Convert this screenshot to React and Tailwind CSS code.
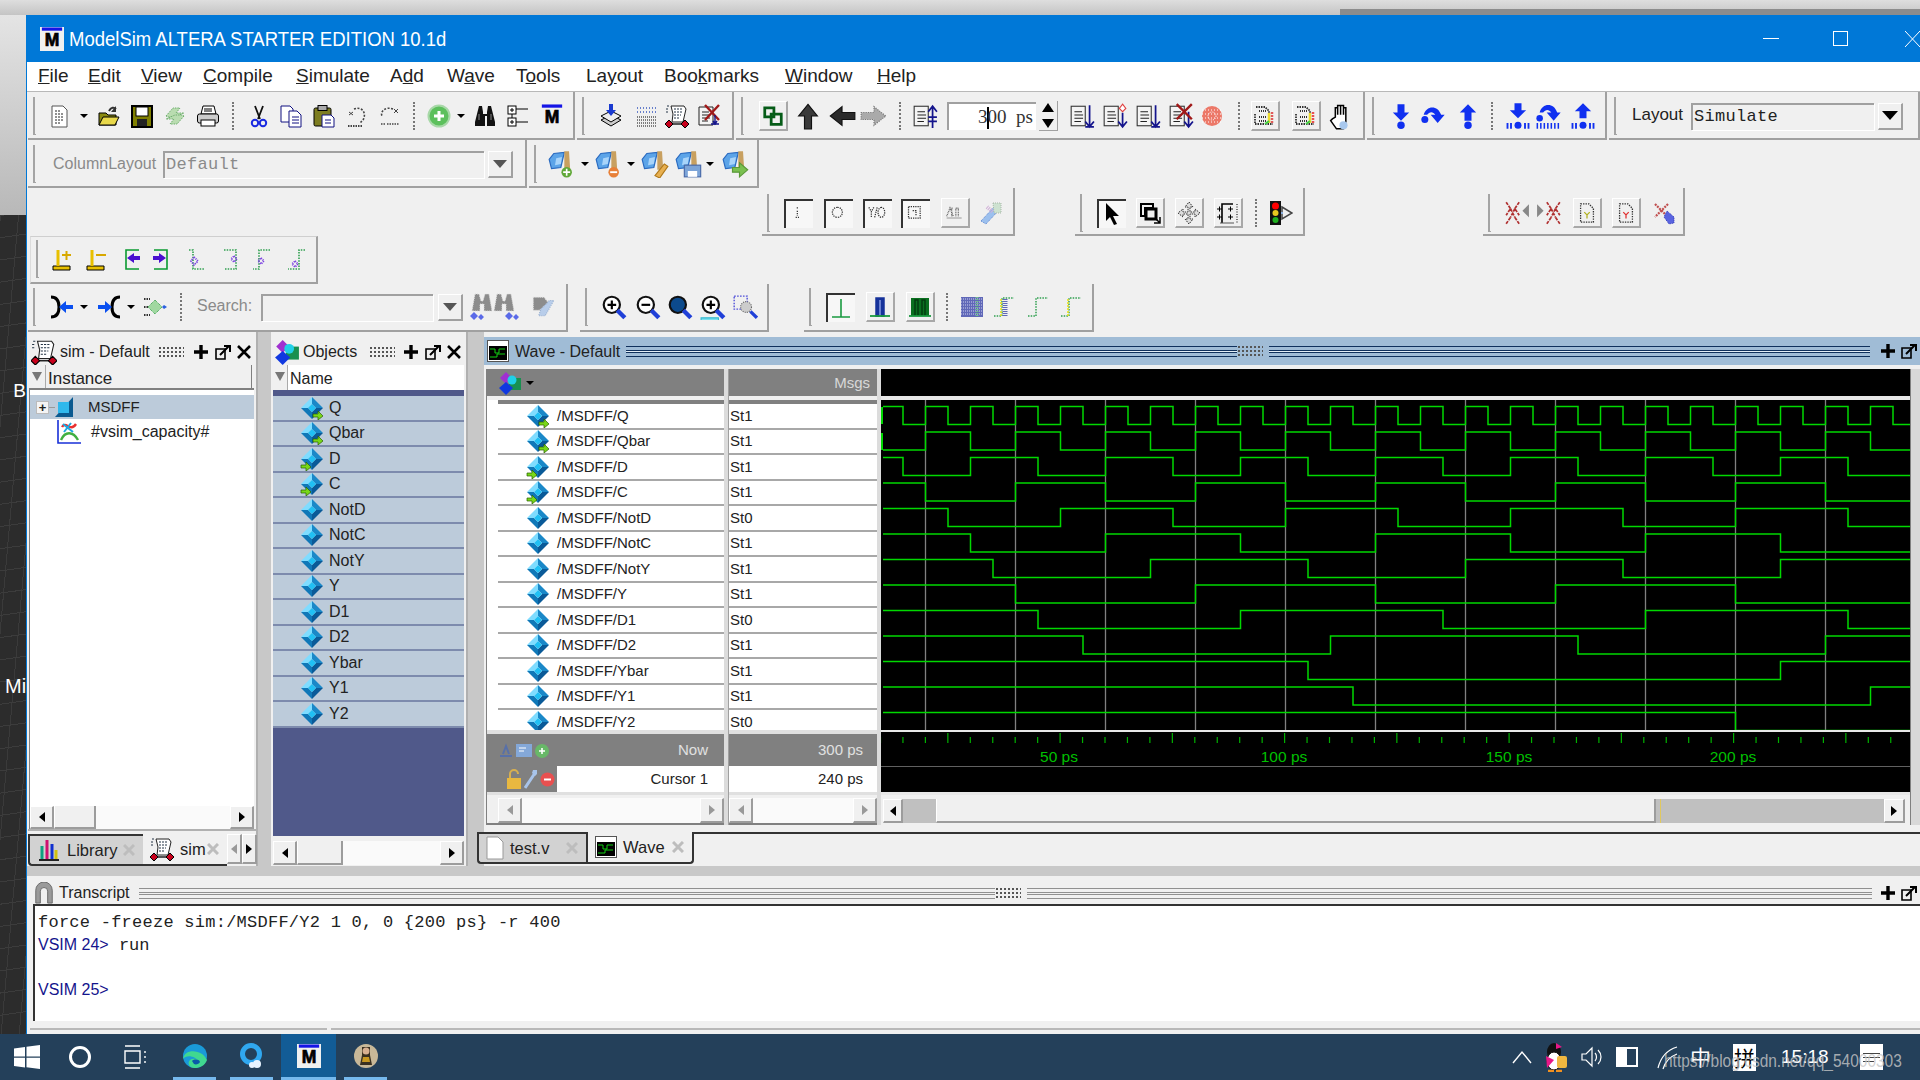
import clsx from "clsx";

const SANS = "font-['Liberation_Sans',sans-serif]";
const MONO = "font-['Liberation_Mono',monospace]";

const Ic = ({ children, s = 24 }) => (
  <svg width={s} height={s} viewBox="0 0 24 24" className="shrink-0">
    {children}
  </svg>
);

// toolbar layout helpers
const T = ({ c, children }) => <div className={clsx("flex justify-center items-center shrink-0", c)}>{children}</div>;
const Grip = ({ c }) => (
  <div className={clsx("shrink-0 h-full flex items-center pl-[5px]", c)}>
    <div className="w-[3px] h-[38px] border-l-2 border-b border-[#a4a4a4]" />
  </div>
);
const Seg = ({ c, children }) => (
  <div className={clsx("flex items-center h-[48px] shrink-0 border-r-2 border-b-2 border-[#a0a0a0]", c)}>{children}</div>
);
const Sep = () => <div className="w-0 h-[28px] border-l-2 border-dotted border-[#777]" />;
const Caret = () => <div className="w-0 h-0 border-x-[4px] border-t-[4px] border-x-transparent border-t-black" />;
const Raised = ({ children }) => (
  <div className="w-[29px] h-[30px] flex items-center justify-center border-r-2 border-b-2 border-[#a8a8a8] border-l border-t border-l-white border-t-white">
    {children}
  </div>
);
const Sunken = ({ children }) => (
  <div className="w-[29px] h-[29px] flex items-center justify-center border-l-2 border-t-2 border-[#333] bg-[#f7f7f7]">{children}</div>
);
const DropBtn = ({ dark }) => (
  <div className="w-[25px] h-[27px] flex items-center justify-center shrink-0 border-r-2 border-b-2 border-[#a0a0a0] border-l border-t border-l-white border-t-white">
    {dark ? (
      <div className="w-0 h-0 border-x-[8px] border-t-[9px] border-x-transparent border-t-black" />
    ) : (
      <div className="w-0 h-0 border-x-[7px] border-t-[8px] border-x-transparent border-t-[#555]" />
    )}
  </div>
);

// ---- toolbar icons
const Doc = () => (
  <Ic>
    <path d="M4 2h11l4 4v17H4z" fill="#fff" stroke="#555" />
    <path d="M7 7h5M7 10h9M7 13h9M7 16h9M7 19h6" stroke="#222" strokeDasharray="2 1" />
  </Ic>
);
const Folder = () => (
  <Ic>
    <path d="M2 9h7l2 2h8v10H2z" fill="#8a8a10" stroke="#000" />
    <path d="M2 21l4-8h16l-4 8z" fill="#e8d84a" stroke="#000" />
    <path d="M12 7c2-4 5-4 7-2" fill="none" stroke="#333" strokeWidth="2" />
    <path d="M19 2v6h-5z" fill="#333" />
  </Ic>
);
const Save = () => (
  <Ic>
    <rect x="2" y="2" width="20" height="21" fill="#808000" stroke="#000" strokeWidth="2" />
    <rect x="6" y="3" width="12" height="9" fill="#fff" stroke="#000" />
    <rect x="7" y="15" width="10" height="7" fill="#222" />
  </Ic>
);
const Refresh = () => (
  <Ic>
    <path d="M3 12L10 4h7l-4 5h8l-9 4H5z" fill="#b9dcb0" stroke="#6fae6f" strokeDasharray="1.5 1" />
    <path d="M21 12l-7 8H7l4-5H3l9-4h7z" fill="#b9dcb0" stroke="#6fae6f" strokeDasharray="1.5 1" />
  </Ic>
);
const Print = () => (
  <Ic>
    <path d="M7 2h11l2 8H5z" fill="#fff" stroke="#000" />
    <rect x="1.5" y="10" width="21" height="9" rx="2" fill="#ccc" stroke="#000" />
    <rect x="5" y="16" width="14" height="6" fill="#fff" stroke="#000" />
    <path d="M8 5h8M8 7h8" stroke="#000" />
  </Ic>
);
const Cut = () => (
  <Ic>
    <path d="M8 2l5 13M16 2l-5 13" stroke="#111" strokeWidth="1.8" fill="none" />
    <circle cx="8" cy="19" r="3.2" fill="none" stroke="#1a2ae0" strokeWidth="2" />
    <circle cx="16" cy="19" r="3.2" fill="none" stroke="#1a2ae0" strokeWidth="2" />
  </Ic>
);
const Copy = () => (
  <Ic>
    <path d="M2 2h9l3 3v13H2z" fill="#fff" stroke="#101080" />
    <path d="M10 7h8l4 4v12H10z" fill="#fff" stroke="#101080" />
    <path d="M13 13h7M13 16h7M13 19h7" stroke="#101080" />
  </Ic>
);
const Paste = () => (
  <Ic>
    <rect x="2" y="4" width="17" height="18" rx="1.5" fill="#7d7d20" stroke="#000" />
    <rect x="6" y="1.5" width="9" height="5" fill="#aaa" stroke="#000" />
    <path d="M10 11h9l3 3v9H10z" fill="#fff" stroke="#101080" />
    <path d="M13 16h6M13 19h6" stroke="#101080" />
  </Ic>
);
const Undo = () => (
  <Ic>
    <path d="M8 5c8-3 13 4 9 11l-3 3" fill="none" stroke="#444" strokeDasharray="2 1.5" strokeWidth="1.6" />
    <path d="M3 8l4 3M3 11l4-3" stroke="#444" />
    <path d="M2 22h14" stroke="#444" strokeDasharray="1.5 1" strokeWidth="2" />
  </Ic>
);
const Redo = () => (
  <Ic>
    <path d="M16 5C8 2 3 8 5 12" fill="none" stroke="#444" strokeDasharray="2 1.5" strokeWidth="1.6" />
    <path d="M17 5l4 4M21 5l-4 4" stroke="#444" />
    <path d="M4 20h4M10 20h12" stroke="#444" strokeDasharray="1.5 1" strokeWidth="1.6" />
  </Ic>
);
const AddGreen = () => (
  <Ic>
    <circle cx="12" cy="12" r="10.5" fill="#5cc05c" stroke="#a8d8a8" strokeWidth="2" />
    <path d="M12 7v10M7 12h10" stroke="#fff" strokeWidth="3" />
  </Ic>
);
const Binoc = () => (
  <Ic>
    <path d="M6 2h3l1 6v2h4V8l1-6h3l4 16v4h-8V12h-2v10H2v-4z" fill="#111" />
    <path d="M6 10v6M18 10v6" stroke="#888" />
  </Ic>
);
const TreeIc = () => (
  <Ic>
    <rect x="2" y="2" width="8" height="8" fill="#fff" stroke="#000" />
    <rect x="2" y="14" width="8" height="8" fill="#fff" stroke="#000" />
    <path d="M4 6h4M6 4v4M4 18h4M6 16v4M10 5h12M10 18h12M6 10v4" stroke="#000" />
  </Ic>
);
const MLogo = ({ s = 24 }) => (
  <svg width={s} height={s} viewBox="0 0 24 26" className="shrink-0">
    <rect x="1" y="0.5" width="22" height="3.5" fill="#1414e6" />
    <text x="12" y="21" textAnchor="middle" fontSize="19" fontWeight="bold" fontFamily="Liberation Sans" fill="#000" stroke="#000" strokeWidth="0.8">
      M
    </text>
  </svg>
);
const StackDown = () => (
  <Ic>
    <path d="M2 16l10-5 10 5-10 6z" fill="#ccc" stroke="#000" />
    <path d="M2 12l10-5 10 5-10 6z" fill="#eee" stroke="#000" />
    <path d="M10 0h4v6h3l-5 6-5-6h3z" fill="#1a3ad0" />
  </Ic>
);
const DotGrid = () => (
  <Ic>
    <path d="M2 4h20M2 8h20" stroke="#3a5abf" strokeDasharray="1 2" strokeWidth="1.5" />
    <path d="M2 13h20M2 16h20M2 19h20M2 22h20" stroke="#555" strokeDasharray="1 1" strokeWidth="1.5" />
  </Ic>
);
const Cart = ({ s = 24 }) => (
  <Ic s={s}>
    <path d="M6 2h13l2 3-3 13H7l1-8z" fill="#fff" stroke="#222" />
    <path d="M9 5h8M9 8h8M9 11h7M9 14h6M2 2h3M1 5h3M1 8h3" stroke="#234" strokeDasharray="2 1" />
    <path d="M4 20h16" stroke="#222" strokeWidth="1.5" />
    <path d="M4 16l4 4-4 4-4-4zM20 16l4 4-4 4-4-4z" fill="#c8001c" stroke="#000" />
  </Ic>
);
const DocX = () => (
  <Ic>
    <path d="M2 3h14v18H2z" fill="#f4f4f4" stroke="#222" />
    <path d="M5 8h7M5 11h8M5 14h8M5 17h6" stroke="#222" />
    <path d="M8 1l14 15M22 1L8 16" stroke="#a01818" strokeWidth="2.4" />
    <path d="M18 11v10M14 20h8M16 17l2 3 2-3" stroke="#14148c" strokeWidth="1.4" fill="none" />
  </Ic>
);
const LinkIc = () => (
  <Ic s={22}>
    <path d="M3 3h10v10H3z" fill="none" stroke="#065c18" strokeWidth="3" />
    <path d="M10 10h11v11H10z" fill="none" stroke="#065c18" strokeWidth="3" />
  </Ic>
);
const Up = () => (
  <Ic s={28}>
    <path d="M12 2l8 10h-5v11H9V12H4z" fill="#3a3a3a" stroke="#111" />
  </Ic>
);
const Left = () => (
  <Ic s={28}>
    <path d="M2 12l10-8v5h11v6H12v5z" fill="#2a2a2a" stroke="#111" />
  </Ic>
);
const Right = () => (
  <Ic s={28}>
    <path d="M22 12l-10-8v5H1v6h11v5z" fill="#aaa" stroke="#777" strokeDasharray="1 1" />
  </Ic>
);
const DocA = ({ kind }) => (
  <Ic s={26}>
    <rect x="2" y="3" width="13" height="18" fill="#f4f4f4" stroke="#333" />
    <path d="M5 8h7M5 11h8M5 14h8M5 17h6" stroke="#222" />
    {kind === "up" && <path d="M19 23V4M15 8l4-5 4 5M15 13h8M15 17h8" stroke="#14148c" strokeWidth="1.6" fill="none" />}
    {kind === "down" && <path d="M19 2v19M15 17l4 5 4-5M15 22h8" stroke="#14148c" strokeWidth="1.6" fill="none" />}
    {kind === "both" && (
      <g>
        <path d="M19 9v12M15 17l4 5 4-5" stroke="#14148c" strokeWidth="1.6" fill="none" />
        <path d="M19 1l3 4-3 3-3-3z" fill="#fff" stroke="#e04040" />
      </g>
    )}
    {kind === "x" && (
      <g>
        <path d="M19 8v13M15 17l4 5 4-5" stroke="#14148c" strokeWidth="1.6" fill="none" />
        <path d="M8 1l14 14M22 1L8 15" stroke="#a01818" strokeWidth="2.2" />
      </g>
    )}
  </Ic>
);
const RedDots = () => (
  <Ic>
    <circle cx="12" cy="12" r="10" fill="#ec7868" />
    <path d="M2 6h20M2 10h20M2 14h20M2 18h20" stroke="#fff" strokeDasharray="1 2" />
    <circle cx="12" cy="12" r="4" fill="none" stroke="#fff" strokeDasharray="1 1" />
  </Ic>
);
const PlotBtn = ({ g }) => (
  <Ic>
    <path d="M3 3h9l4 4v6M2 10v10h18" fill="none" stroke="#333" strokeDasharray="1.5 1" strokeWidth="1.8" />
    <path d="M6 7h7M6 13h8M6 17h8" stroke="#333" strokeDasharray="1 1" strokeWidth="1.8" />
    <path d="M16 9v10" stroke="#eedd30" strokeWidth="2.5" />
    <path d="M19 8v12" stroke={g ? "#e85050" : "#e05a5a"} strokeWidth="2.5" strokeDasharray="2 1" />
    <path d="M12 20l4-3" stroke="#40d040" strokeWidth="2" />
  </Ic>
);
const Hand = () => (
  <Ic s={28}>
    <path d="M8 13V5h2v6-8h2.5v8-8H15v8-6h2v12l-2 6H9l-5-7 1.5-1.5z" fill="#fff" stroke="#000" strokeWidth="1.3" />
    <circle cx="15" cy="20" r="3.5" fill="#a8c8ee" />
  </Ic>
);
const B = "#1030f0";
const StepIn = () => (
  <Ic s={28}>
    <path d="M9 2h6v7h4l-7 7-7-7h4z" fill={B} />
    <circle cx="12" cy="20" r="3.2" fill={B} />
  </Ic>
);
const StepOver = () => (
  <Ic s={28}>
    <path d="M4 11c2-8 12-9 15 0h3l-6 7-6-7h4c-2-3-5-3-7 0z" fill={B} />
    <circle cx="5" cy="15" r="3" fill={B} />
  </Ic>
);
const StepOut = () => (
  <Ic s={28}>
    <path d="M9 16h6V9h4l-7-7-7 7h4z" fill={B} />
    <circle cx="12" cy="20" r="3.2" fill={B} />
  </Ic>
);
const Bars = () => <path d="M3 18v5M6 18v5M18 18v5M21 18v5" stroke={B} strokeWidth="1.6" />;
const StepInAll = () => (
  <Ic s={28}>
    <path d="M9 1h6v6h4l-7 7-7-7h4z" fill={B} />
    <circle cx="12" cy="20" r="3" fill={B} />
    <Bars />
  </Ic>
);
const StepOverAll = () => (
  <Ic s={28}>
    <path d="M4 9c2-8 12-9 15 0h3l-6 7-6-7h4c-2-3-5-3-7 0z" fill={B} />
    <circle cx="4" cy="14" r="2.8" fill={B} />
    <path d="M2 18v5M5 18v5M8 18v5M11 18v5M14 18v5M17 18v5M20 18v5" stroke={B} strokeWidth="1.3" />
  </Ic>
);
const StepOutAll = () => (
  <Ic s={28}>
    <path d="M9 14h6V8h4l-7-7-7 7h4z" fill={B} />
    <circle cx="12" cy="20" r="3" fill={B} />
    <Bars />
  </Ic>
);
const Flag = ({ badge, c }) => (
  <Ic s={28}>
    <path d="M1 8l4-5 9-1-3 13-8 1z" fill="#5ca4e8" stroke="#2a6ac0" />
    <path d="M7 7l5-1-1 6-5 1z" fill="#a8d4fa" />
    <path d="M14 1h4l1 16h-5z" fill="#c8a060" />
    {badge === "plus" && <circle cx="16" cy="19" r="4.5" fill={c} />}
    {badge === "plus" && <path d="M13 19h6M16 16v6" stroke="#fff" strokeWidth="1.4" />}
    {badge === "minus" && <circle cx="16" cy="19" r="4.5" fill={c} />}
    {badge === "minus" && <path d="M13 19h6" stroke="#fff" strokeWidth="1.6" />}
    {badge === "pen" && <path d="M12 22l8-10 3 2-7 10z" fill="#e8b050" stroke="#b07818" />}
    {badge === "save" && <rect x="8" y="13" width="14" height="10" fill="#7ca4d8" stroke="#4a6aa8" />}
    {badge === "save" && <rect x="11" y="18" width="8" height="5" fill="#fff" />}
    {badge === "go" && <path d="M9 15h6v-4l7 6-7 6v-4H9z" fill="#7ac050" stroke="#5a9838" />}
  </Ic>
);
const DottedGlyph = ({ d }) => (
  <Ic s={20}>
    <path d={d} fill="none" stroke="#333" strokeDasharray="1.5 1.2" strokeWidth="1.5" />
  </Ic>
);
const FillAll = () => (
  <Ic s={20}>
    <path d="M2 16l4-10 4 10M8 16V6h2M13 16V6h3v10" fill="none" stroke="#555" strokeDasharray="1 1" strokeWidth="1.5" />
    <path d="M2 18h18" stroke="#888" />
  </Ic>
);
const Wrench = () => (
  <Ic>
    <path d="M2 20L16 5l4 4L7 23z" fill="#9cc0ee" stroke="#5a84d0" strokeDasharray="1 1" />
    <path d="M14 2h8v10h-7z" fill="#cde2d0" stroke="#a8b8a8" strokeDasharray="1 1" />
    <path d="M8 6l6 5" stroke="#d0b0d8" strokeWidth="4" strokeDasharray="1 1" />
  </Ic>
);
const Arrow = () => (
  <Ic>
    <path d="M6 1v18l4-4 4 8 3-1-4-8h6z" fill="#000" />
  </Ic>
);
const ZoomArea = () => (
  <Ic>
    <path d="M3 3h12v4H7v8H3z" fill="none" stroke="#000" strokeWidth="2" />
    <rect x="8" y="8" width="10" height="10" fill="none" stroke="#000" strokeWidth="3" />
    <path d="M17 17l5 5M22 16v6h-6" stroke="#000" strokeWidth="1.5" fill="none" />
  </Ic>
);
const Move = () => (
  <Ic>
    <path d="M12 1l4 5h-3v5h5V8l5 4-5 4v-3h-5v5h3l-4 5-4-5h3v-5H6v3l-5-4 5-4v3h5V6H8z" fill="#ddd" stroke="#333" strokeDasharray="1.5 1" />
  </Ic>
);
const Ruler = () => (
  <Ic>
    <path d="M6 22V3h11" fill="none" stroke="#000" strokeWidth="1.6" />
    <path d="M1 8h5M3.5 5.5v5M1 16h5M3.5 13.5v5M12 8h5M14.5 5.5v5M12 16h5M14.5 13.5v5" stroke="#000" />
    <path d="M21 3v19" stroke="#555" strokeDasharray="1 1.5" strokeWidth="1.6" />
    <path d="M4 22h14" stroke="#555" />
  </Ic>
);
const Traffic = () => (
  <Ic>
    <rect x="1" y="0" width="11" height="24" fill="#111" />
    <circle cx="6.5" cy="5" r="3.5" fill="#f00" />
    <circle cx="6.5" cy="12" r="3" fill="#e8c820" />
    <circle cx="6.5" cy="19" r="3" fill="#20b020" />
    <path d="M13 6l10 6-10 6z" fill="none" stroke="#444" strokeWidth="1.5" />
    <path d="M12 12h2" stroke="#8ab0e0" strokeWidth="2" />
  </Ic>
);
const BreakX = ({ flip }) => (
  <Ic s={26}>
    <g transform={flip ? "translate(24 0) scale(-1 1)" : undefined}>
      <path d="M2 2l4 6-4 6M2 22l4-6M14 2l-4 6 4 6M14 22l-4-6M6 8l4 8M10 8l-4 8" stroke="#b03030" strokeWidth="1.6" strokeDasharray="3 1" fill="none" />
      <path d="M23 4l-6 6 6 6z" fill="#888" />
    </g>
  </Ic>
);
const DotDoc = ({ c }) => (
  <Ic s={22}>
    <path d="M5 2h9l5 5v15H5z" fill="none" stroke="#333" strokeDasharray="1.5 1.2" strokeWidth="1.4" />
    <path d="M9 11l3 3 3-3M12 14v4" stroke={c} strokeWidth="1.4" fill="none" />
  </Ic>
);
const XBlue = () => (
  <Ic>
    <path d="M3 3l13 13M16 3L3 16" stroke="#c05050" strokeWidth="2.2" strokeDasharray="2 1" />
    <path d="M15 10l7 6v6l-5 1-5-7z" fill="#5a64e0" stroke="#3038b8" strokeDasharray="1 1" />
  </Ic>
);
const PinAdd = () => (
  <Ic>
    <path d="M3 19h17v4H3z" fill="#e8c000" stroke="#000" />
    <path d="M8 19V3" stroke="#e8c000" strokeWidth="3" />
    <path d="M12 8h9M16.5 4v9" stroke="#d8a800" strokeWidth="2" />
  </Ic>
);
const PinSub = () => (
  <Ic>
    <path d="M3 19h17v4H3z" fill="#e8c000" stroke="#000" />
    <path d="M8 19V3" stroke="#e8c000" strokeWidth="3" />
    <path d="M12 8h10" stroke="#d8a800" strokeWidth="2" />
  </Ic>
);
const StepG = ({ flip, arrow }) => (
  <Ic>
    <g transform={flip ? "translate(24 0) scale(-1 1)" : undefined}>
      <path d="M21 3H8v19h13" fill="none" stroke="#0a9a30" strokeWidth="1.6" strokeLinejoin="miter" />
      {arrow && <path d="M9 11l7-5v3h6v4h-6v3z" fill="#4a10d0" />}
    </g>
  </Ic>
);
const StepDot = ({ d, dot }) => (
  <Ic>
    <path d={d} fill="none" stroke="#30a050" strokeDasharray="1.5 1.2" strokeWidth="1.6" />
    <path d={dot} fill="none" stroke="#7a40e0" strokeDasharray="1.2 1" strokeWidth="1.8" />
  </Ic>
);
const Merge = ({ flip }) => (
  <Ic>
    <g transform={flip ? "translate(24 0) scale(-1 1)" : undefined}>
      <path d="M1 2c8 0 8 8 8 10s0 10-8 10" fill="none" stroke="#000" strokeWidth="3" />
      <path d="M9 12l7-6v4h7v4h-7v4z" fill="#0a50f0" />
    </g>
  </Ic>
);
const DiaDots = () => (
  <Ic>
    <path d="M1 4h6M1 12h4M1 20h6" stroke="#333" strokeDasharray="1.5 1" strokeWidth="2" />
    <path d="M12 5l7 7-7 7-7-7z" fill="#a0d8a0" stroke="#2a9a40" strokeDasharray="1 1" />
    <path d="M21 10l3 2-3 2-2-2z" fill="#2a60e0" />
  </Ic>
);
const BinocOff = () => (
  <svg width="52" height="28" viewBox="0 0 52 28" className="shrink-0">
    <path d="M6 1h4l2 7h2l2-7h4l3 17h-8v-7h-4v7H3zM28 1h4l2 7h2l2-7h4l3 17h-8v-7h-4v7h-8z" fill="#8c8c8c" stroke="#ddd" strokeDasharray="1 1" />
    <path d="M1 23l4-4 4 4-4 4zM9 24l3-3 3 3-3 3zM36 23l4-4 4 4-4 4zM44 24l3-3 3 3-3 3z" fill="#5a6ae8" />
  </svg>
);
const Wrench2 = () => (
  <Ic s={26}>
    <path d="M3 3h10l4 5-8 7H3z" fill="#8c8c8c" stroke="#ddd" strokeDasharray="1 1" />
    <path d="M10 14l8-8h4l-8 14H8z" fill="#b8cdea" stroke="#99b0d0" strokeDasharray="1 1" />
  </Ic>
);
const Zoomer = ({ f, sign, under }) => (
  <Ic s={26}>
    <circle cx="10" cy="10" r="7.5" fill={f} stroke="#111" strokeWidth="2" />
    <path d="M15 15l7 7" stroke="#2040d8" strokeWidth="4" />
    {sign && <path d={sign} stroke="#000" strokeWidth="2" />}
    {under && <path d="M1 22h16v3H1z" fill="#7ce0ee" stroke="#30b8d0" />}
  </Ic>
);
const ZoomDot = () => (
  <Ic s={26}>
    <path d="M2 2h12v12H2z" fill="none" stroke="#5050d8" strokeDasharray="1.5 1.2" strokeWidth="1.3" />
    <circle cx="13" cy="12" r="5" fill="#ccc" stroke="#666" strokeDasharray="1 1" />
    <path d="M17 16l6 6" stroke="#2040d8" strokeWidth="3" />
  </Ic>
);
const Cur1 = () => (
  <Ic>
    <path d="M12 3v18M3 21h18" stroke="#1a9a40" strokeWidth="1.6" />
  </Ic>
);
const Cur2 = () => (
  <Ic>
    <path d="M8 22V3h8v19" fill="#16329a" stroke="#16329a" strokeWidth="1.5" />
    <path d="M11 22V5h2v17" fill="#6a80d0" />
    <path d="M2 21h20" stroke="#1a9a40" strokeWidth="1.8" />
  </Ic>
);
const Cur3 = () => (
  <Ic>
    <rect x="3" y="3" width="18" height="18" fill="#0a7020" />
    <path d="M7 21V5h3v16M14 21V5h3v16" fill="none" stroke="#043a10" strokeWidth="1.4" />
    <path d="M1 21h22" stroke="#1a9a40" strokeWidth="1.8" />
  </Ic>
);
const DotBlock = () => (
  <Ic>
    <rect x="1" y="2" width="22" height="20" fill="#6068b8" />
    <path d="M1 4h22M1 7h22M1 10h22M1 13h22M1 16h22M1 19h22" stroke="#cfd2ee" strokeDasharray="1 1" />
    <path d="M17 2v20" stroke="#6fc08a" strokeWidth="3" strokeDasharray="1 1" />
  </Ic>
);
const Pulse = ({ y, bar }) => (
  <Ic>
    <path d="M2 21h8V3h12" fill="none" stroke="#30a050" strokeDasharray="1.5 1.2" strokeWidth="1.5" />
    {y && <path d="M9 21V3" stroke="#e8e020" strokeWidth="1.6" strokeDasharray="2 1" />}
    {bar && <path d="M13 21V3" stroke="#6068b8" strokeWidth="5" strokeDasharray="1 1" />}
  </Ic>
);

// ---- signal and panel icons
const Dia = ({ a }) => (
  <svg width="24" height="24" viewBox="0 0 24 24" className="shrink-0">
    <path d="M12 1L1 12h7l4-4z" fill="#7fdcff" />
    <path d="M12 1l11 11h-7l-4-4z" fill="#1a88c8" />
    <path d="M1 12l11 11v-7l-4-4z" fill="#1078b8" />
    <path d="M23 12L12 23v-7l4-4z" fill="#0a5a98" />
    <path d="M12 8l4 4-4 4-4-4z" fill="#20c0f4" />
    {a === "out" && <path d="M13 18h5v-3l5 5-5 4v-3h-5z" fill="#78d818" stroke="#2a6000" strokeWidth="0.7" />}
    {a === "in" && <path d="M1 18h5v-3l5 5-5 4v-3H1z" fill="#78d818" stroke="#2a6000" strokeWidth="0.7" />}
  </svg>
);
const Shapes = ({ s = 24 }) => (
  <Ic s={s}>
    <path d="M8 1l6 6-6 6-6-6z" fill="#a030d0" />
    <rect x="11" y="7" width="12" height="12" fill="#189050" />
    <path d="M8 11l7 6-7 7-7-7z" fill="#1038e0" />
    <circle cx="14" cy="9" r="4.5" fill="#20d0e8" />
  </Ic>
);
const WaveIc = () => (
  <svg width="22" height="22" viewBox="0 0 22 22" className="shrink-0">
    <rect x="0.5" y="0.5" width="21" height="21" fill="#fff" stroke="#555" />
    <rect x="2" y="6" width="18" height="14" fill="#000" />
    <path d="M3 9h5v4h4V9h6M3 17h7v-3h8" fill="none" stroke="#10d010" />
  </svg>
);
const LibIc = () => (
  <Ic>
    <path d="M2 22h20" stroke="#222" strokeWidth="2" />
    <path d="M5 8v13" stroke="#10a080" strokeWidth="3" />
    <path d="M10 2v19" stroke="#d01070" strokeWidth="3" />
    <path d="M15 6v15" stroke="#1030d0" strokeWidth="3" />
    <path d="M19 12v9" stroke="#d0c010" strokeWidth="3" />
  </Ic>
);
const PlusCtl = () => (
  <svg width="16" height="16" viewBox="0 0 16 16" className="shrink-0">
    <path d="M8 1v14M1 8h14" stroke="#000" strokeWidth="3.4" />
  </svg>
);
const UndockCtl = () => (
  <svg width="16" height="16" viewBox="0 0 16 16" className="shrink-0">
    <path d="M1 5h9v10H1z" fill="none" stroke="#000" strokeWidth="1.6" />
    <path d="M5 11l9-9M9 2h6v6" stroke="#000" strokeWidth="2" fill="none" />
  </svg>
);
const CloseCtl = () => (
  <svg width="14" height="14" viewBox="0 0 14 14" className="shrink-0">
    <path d="M1 1l12 12M13 1L1 13" stroke="#000" strokeWidth="2.6" />
  </svg>
);
const Dots = () => <div className="w-[26px] h-[12px] bg-[radial-gradient(#555_1px,transparent_1px)] bg-[length:4px_4px]" />;
const TabX = () => (
  <svg width="12" height="12" viewBox="0 0 12 12" className="shrink-0">
    <path d="M1 1l10 10M11 1L1 11" stroke="#bdbdbd" strokeWidth="3" />
  </svg>
);

const ArrowTri = ({ dir, dim }) =>
  dir === "l" ? (
    <div className={clsx("w-0 h-0 border-y-[5px] border-r-[6px] border-y-transparent", dim ? "border-r-[#999]" : "border-r-black")} />
  ) : (
    <div className={clsx("w-0 h-0 border-y-[5px] border-l-[6px] border-y-transparent", dim ? "border-l-[#999]" : "border-l-black")} />
  );
const SBtn = ({ dir, dim, c }) => (
  <div className={clsx("flex items-center justify-center shrink-0 border-r-2 border-b-2 border-[#9c9c9c] border-l border-t border-l-white border-t-white bg-[#f0f0f0]", c)}>
    <ArrowTri dir={dir} dim={dim} />
  </div>
);
const HScroll = ({ thumb, c, dim }) => (
  <div className={clsx("flex h-full bg-[#fafafa]", c)}>
    <SBtn dir="l" dim={dim} c="w-[24px]" />
    {thumb && <div className={clsx("shrink-0 border-r-2 border-b-2 border-[#9c9c9c] border-l border-l-white bg-[#f0f0f0]", thumb)} />}
    <div className="flex-1" />
    <SBtn dir="r" dim={dim} c="w-[24px]" />
  </div>
);

const PanelHead = ({ icon, title, grip }) => (
  <div className="h-[30px] flex items-center shrink-0 pt-[3px]">
    <div className="w-[26px] flex justify-center ml-[3px]">{icon}</div>
    <span className="ml-[3px] text-[16px] text-[#222] whitespace-nowrap">{title}</span>
    <div className={clsx("flex items-center", grip)}>
      <Dots />
    </div>
    <div className="ml-auto flex items-center gap-[6px] pr-[5px]">
      <PlusCtl />
      <UndockCtl />
      <CloseCtl />
    </div>
  </div>
);

const Tab = ({ active, icon, label, c }) => (
  <div
    className={clsx(
      "h-[32px] flex items-center shrink-0 border-b-2 border-[#333]",
      active ? "bg-[#f0f0f0]" : "bg-[#d2d2d2] border-l-2 border-t-2 rounded-bl-[4px]",
      c
    )}
  >
    <div className="ml-[7px]">{icon}</div>
    <span className="ml-[6px] text-[16.5px] text-[#222]">{label}</span>
    <div className="ml-auto mr-[8px]">
      <TabX />
    </div>
  </div>
);

const OBJECTS = [
  ["Q", "out"],
  ["Qbar", "out"],
  ["D", "in"],
  ["C", "in"],
  ["NotD"],
  ["NotC"],
  ["NotY"],
  ["Y"],
  ["D1"],
  ["D2"],
  ["Ybar"],
  ["Y1"],
  ["Y2"],
];
const VALUES = ["St1", "St1", "St1", "St1", "St0", "St1", "St1", "St1", "St0", "St1", "St1", "St1", "St0"];

// Q toggles every step, the rest were read off the trace
const toggles = (from, to, step) => {
  const out = [];
  for (let n = from; n <= to; n += step) out.push(n);
  return out;
};
const TRACES = [
  { hi: 1, t: toggles(1, 45, 1) },
  { hi: 0, t: toggles(2, 44, 2) },
  { hi: 1, t: toggles(1, 43, 3) },
  { hi: 1, t: toggles(2, 42, 4) },
  { hi: 1, t: toggles(3, 43, 5) },
  { hi: 1, t: toggles(4, 40, 6) },
  { hi: 1, t: toggles(5, 40, 7) },
  { hi: 1, t: toggles(6, 38, 8) },
  { hi: 1, t: toggles(7, 43, 9) },
  { hi: 1, t: toggles(9, 42, 11) },
  { hi: 1, t: [19, 40] },
  { hi: 1, t: [21, 44] },
  { hi: 1, t: [38] },
];
const nx = (n) => 881.5 + 22.5 * n;
const tracePath = (row, i) => {
  const yHi = 407.5 + 25.5 * i;
  const yLo = yHi + 18;
  let lvl = row.hi;
  let d = `M884 ${lvl ? yHi : yLo}`;
  for (const n of row.t) {
    const x = nx(n);
    d += `H${x}V${lvl ? yLo : yHi}`;
    lvl = lvl ? 0 : 1;
  }
  return d + "H1911";
};

const Waves = () => (
  <svg width="1029" height="330" viewBox="882 401 1029 330" className="block bg-black shrink-0">
    {toggles(926, 1900, 90).map((x) => (
      <path key={x} d={`M${x + 0.5} 401V731`} stroke="#808080" strokeWidth="1.3" />
    ))}
    <path d="M883 408V425M883 434V451" stroke="#00d800" strokeWidth="2" />
    {TRACES.map((r, i) => (
      <path key={i} d={tracePath(r, i)} fill="none" stroke="#00d800" strokeWidth="1.5" />
    ))}
  </svg>
);

const TimeRuler = () => {
  const ticks = [];
  for (let t = 10; t <= 240; t += 5) ticks.push(t);
  return (
    <svg width="1029" height="34" viewBox="882 733 1029 34" className="block shrink-0">
      {ticks.map((t) => {
        const x = 836.6 + 4.49 * t;
        return <path key={t} d={`M${x} ${t % 25 === 0 ? 734 : 738}V744`} stroke="#00b000" strokeWidth="1.2" />;
      })}
      {[
        [1060, "50 ps"],
        [1285, "100 ps"],
        [1510, "150 ps"],
        [1734, "200 ps"],
      ].map(([x, s]) => (
        <text key={s} x={x} y="763" textAnchor="middle" fontSize="15.5" fontFamily="Liberation Sans" fill="#00c000">
          {s}
        </text>
      ))}
    </svg>
  );
};

const Input = ({ c, children }) => (
  <div className={clsx("h-[27px] flex items-center border-l-2 border-t-2 border-[#a0a0a0] shadow-[1px_1px_0_#fff] overflow-hidden shrink-0 pl-[1px] tracking-[0.3px]", MONO, c)}>{children}</div>
);

export default function App() {
  return (
    <div className={clsx("w-[1920px] h-[1080px] overflow-hidden flex flex-col bg-[#dcdcdc] relative", SANS)}>
      {/* desktop strip above the window */}
      <div className="h-[15px] shrink-0 flex bg-[linear-gradient(#dedede,#c4c4c4)]">
        <div className="ml-auto w-[580px] h-[6px] mt-[9px] bg-[#8c8c8c]" />
      </div>

      <div className="flex-1 flex min-h-0">
        {/* desktop peeking out on the left */}
        <div className="w-[26px] shrink-0 flex flex-col">
          <div className="h-[200px] bg-[linear-gradient(#e4e4e4,#b8b8b8)]" />
          <div className="flex-1 bg-[#2c2c2c] bg-[repeating-linear-gradient(172deg,#3c3c3c_0_1px,transparent_1px_22px),repeating-linear-gradient(95deg,#3a3a3a_0_1px,transparent_1px_18px)] text-white flex flex-col items-end overflow-hidden">
            <div className="mt-[166px] text-[19px] leading-none">B</div>
            <div className="mt-[276px] text-[20px] leading-none w-full pl-[5px] whitespace-nowrap">Mi</div>
          </div>
        </div>

        {/* ModelSim window */}
        <div className="flex-1 flex flex-col min-w-0 border-l border-[#0078d7] bg-[#f0f0f0]">
          <div className="h-[47px] shrink-0 bg-[#0078d7] flex items-center text-white">
            <div className="ml-[13px] bg-[#f0f0f0] flex">
              <MLogo />
            </div>
            <span className="ml-[5px] text-[18.5px] scale-y-[1.12] whitespace-nowrap">ModelSim ALTERA STARTER EDITION 10.1d</span>
            <div className="ml-auto w-[16px] h-px bg-white mr-[54px]" />
            <div className="w-[15px] h-[15px] border border-white mr-[57px]" />
            <svg width="15" height="16" viewBox="0 0 15 16" className="shrink-0">
              <path d="M0 0l15 16M15 0L0 16" stroke="#fff" strokeWidth="1" />
            </svg>
          </div>

          <div className="h-[30px] shrink-0 bg-white flex items-center text-[19px] text-[#222] border-b border-[#b8b8b8]">
            <div className="w-[11px]" />
            <span className="w-[50px]"><u>F</u>ile</span>
            <span className="w-[53px]"><u>E</u>dit</span>
            <span className="w-[62px]"><u>V</u>iew</span>
            <span className="w-[93px]"><u>C</u>ompile</span>
            <span className="w-[94px]"><u>S</u>imulate</span>
            <span className="w-[57px]">A<u>d</u>d</span>
            <span className="w-[69px]">W<u>a</u>ve</span>
            <span className="w-[70px]">T<u>o</u>ols</span>
            <span className="w-[78px]">La<u>y</u>out</span>
            <span className="w-[121px]">Boo<u>k</u>marks</span>
            <span className="w-[92px]"><u>W</u>indow</span>
            <span><u>H</u>elp</span>
          </div>

          {/* toolbar row 1 */}
          <div className="flex h-[48px] shrink-0 pl-px gap-[2px]">
            <Seg c="w-[547px] pt-[2px]">
              <Grip c="w-[18px]" />
              <T c="w-[28px]"><Doc /></T>
              <T c="w-[20px]"><Caret /></T>
              <T c="w-[30px]"><Folder /></T>
              <T c="w-[36px]"><Save /></T>
              <T c="w-[30px]"><Refresh /></T>
              <T c="w-[36px]"><Print /></T>
              <T c="w-[14px]"><Sep /></T>
              <T c="w-[38px]"><Cut /></T>
              <T c="w-[26px]"><Copy /></T>
              <T c="w-[40px]"><Paste /></T>
              <T c="w-[28px]"><Undo /></T>
              <T c="w-[34px]"><Redo /></T>
              <T c="w-[16px]"><Sep /></T>
              <T c="w-[34px]"><AddGreen /></T>
              <T c="w-[10px]"><Caret /></T>
              <T c="w-[38px]"><Binoc /></T>
              <T c="w-[28px]"><TreeIc /></T>
              <T c="w-[40px]"><MLogo /></T>
            </Seg>
            <Seg c="w-[157px] pt-[2px]">
              <Grip c="w-[18px]" />
              <T c="w-[32px]"><StackDown /></T>
              <T c="w-[40px]"><DotGrid /></T>
              <T c="w-[20px]"><Cart /></T>
              <T c="w-[44px]"><DocX /></T>
            </Seg>
            <Seg c="w-[629px] pt-[2px]">
              <Grip c="w-[15px]" />
              <T c="w-[44px]"><Raised><LinkIc /></Raised></T>
              <T c="w-[26px]"><Up /></T>
              <T c="w-[42px]"><Left /></T>
              <T c="w-[22px]"><Right /></T>
              <T c="w-[30px]"><Sep /></T>
              <T c="w-[20px]"><DocA kind="up" /></T>
              <div className="w-[12px] shrink-0" />
              <div className="w-[89px] h-[28px] shrink-0 flex items-center justify-end pr-[3px] bg-white border-l-2 border-t-2 border-[#a0a0a0] text-[19px] text-[#333] font-['Liberation_Serif',serif]">
                <span className="whitespace-pre">3<span className="inline-block w-[2px] h-[22px] -mx-[1px] align-middle bg-black" />00&nbsp; ps</span>
              </div>
              <div className="ml-[3px] w-[19px] h-[30px] shrink-0 flex flex-col items-center justify-between py-[2px] border-r border-b border-[#a0a0a0]">
                <div className="w-0 h-0 border-x-[6px] border-b-[9px] border-x-transparent border-b-black" />
                <div className="w-0 h-0 border-x-[6px] border-t-[9px] border-x-transparent border-t-black" />
              </div>
              <T c="w-[48px]"><DocA kind="down" /></T>
              <T c="w-[18px]"><DocA kind="both" /></T>
              <T c="w-[48px]"><DocA kind="down" /></T>
              <T c="w-[18px]"><DocA kind="x" /></T>
              <T c="w-[44px]"><RedDots /></T>
              <T c="w-[10px]"><Sep /></T>
              <T c="w-[42px]"><Raised><PlotBtn /></Raised></T>
              <T c="w-[40px]"><Raised><PlotBtn g /></Raised></T>
              <T c="w-[28px]"><Hand /></T>
            </Seg>
            <Seg c="w-[240px] pt-[2px]">
              <Grip c="w-[18px]" />
              <T c="w-[32px]"><StepIn /></T>
              <T c="w-[32px]"><StepOver /></T>
              <T c="w-[38px]"><StepOut /></T>
              <T c="w-[10px]"><Sep /></T>
              <T c="w-[42px]"><StepInAll /></T>
              <T c="w-[20px]"><StepOverAll /></T>
              <T c="w-[48px]"><StepOutAll /></T>
            </Seg>
            <Seg c="flex-1 min-w-0 shrink pt-[2px]">
              <Grip c="w-[23px]" />
              <span className="w-[59px] shrink-0 text-[17px] text-[#222] -mt-[3px]">Layout</span>
              <Input c="w-[183px] text-[17px] text-[#222]">Simulate</Input>
              <div className="w-[4px] shrink-0" />
              <DropBtn dark />
            </Seg>
          </div>

          {/* toolbar row 2 */}
          <div className="flex h-[48px] shrink-0 pl-px gap-[2px]">
            <Seg c="w-[499px] pt-[2px]">
              <Grip c="w-[25px]" />
              <span className="w-[110px] shrink-0 text-[16px] text-[#8a8a8a]">ColumnLayout</span>
              <Input c="w-[321px] text-[17px] text-[#8a8a8a]">Default</Input>
              <div className="w-[4px] shrink-0" />
              <DropBtn />
            </Seg>
            <Seg c="w-[230px] pt-[2px]">
              <Grip c="w-[15px]" />
              <T c="w-[36px]"><Flag badge="plus" c="#60a838" /></T>
              <T c="w-[10px]"><Caret /></T>
              <T c="w-[38px]"><Flag badge="minus" c="#e88038" /></T>
              <T c="w-[6px]"><Caret /></T>
              <T c="w-[42px]"><Flag badge="pen" /></T>
              <T c="w-[26px]"><Flag badge="save" /></T>
              <T c="w-[16px]"><Caret /></T>
              <T c="w-[36px]"><Flag badge="go" /></T>
            </Seg>
          </div>

          {/* toolbar row 3 */}
          <div className="flex h-[48px] shrink-0">
            <Seg c="w-[253px] ml-[735px] pt-[4px]">
              <Grip c="w-[16px]" />
              <T c="w-[40px]"><Sunken><DottedGlyph d="M10 4v2M10 8v6M8 16h4" /></Sunken></T>
              <T c="w-[40px]"><Sunken><DottedGlyph d="M10 4a6 6 0 1 0 .1 0z" /></Sunken></T>
              <T c="w-[38px]"><Sunken><DottedGlyph d="M1 4l3 5v7M7 4L4 9M8 16l3-12M16 4a4 6 0 1 0 .1 0z" /></Sunken></T>
              <T c="w-[38px]"><Sunken><DottedGlyph d="M3 3h14v14H3zM8 8h4v6" /></Sunken></T>
              <T c="w-[42px]"><Raised><FillAll /></Raised></T>
              <T c="w-[30px]"><Wrench /></T>
            </Seg>
            <Seg c="w-[230px] ml-[60px] pt-[4px]">
              <Grip c="w-[17px]" />
              <T c="w-[38px]"><Sunken><Arrow /></Sunken></T>
              <T c="w-[40px]"><Raised><ZoomArea /></Raised></T>
              <T c="w-[38px]"><Raised><Move /></Raised></T>
              <T c="w-[40px]"><Raised><Ruler /></Raised></T>
              <T c="w-[16px]"><Sep /></T>
              <T c="w-[34px]"><Traffic /></T>
            </Seg>
            <Seg c="w-[202px] ml-[178px] pt-[4px]">
              <Grip c="w-[20px]" />
              <T c="w-[28px]"><BreakX /></T>
              <T c="w-[36px]"><BreakX flip /></T>
              <T c="w-[40px]"><Raised><DotDoc c="#b0b020" /></Raised></T>
              <T c="w-[38px]"><Raised><DotDoc c="#e03030" /></Raised></T>
              <T c="w-[38px]"><XBlue /></T>
            </Seg>
          </div>

          {/* toolbar row 4 */}
          <div className="flex h-[48px] shrink-0 pl-[3px]">
            <Seg c="w-[288px] pb-[2px] border-t border-t-[#cfcfcf] border-l border-l-[#dcdcdc]">
              <Grip c="w-[16px]" />
              <T c="w-[30px]"><PinAdd /></T>
              <T c="w-[38px]"><PinSub /></T>
              <T c="w-[30px]"><StepG arrow /></T>
              <T c="w-[36px]"><StepG flip arrow /></T>
              <T c="w-[34px]"><StepDot d="M3 3h4v19h12" dot="M8 10l4 4-4 4-3-4z" /></T>
              <T c="w-[30px]"><StepDot d="M6 3h12v19H6" dot="M16 9l3 3-3 3-3-3z" /></T>
              <T c="w-[32px]"><StepDot d="M21 3H10v19H4" dot="M12 11l3 3-3 3-3-3z" /></T>
              <T c="w-[36px]"><StepDot d="M22 3h-6v19H5" dot="M12 14l3 3-3 3-3-3z" /></T>
            </Seg>
          </div>

          {/* toolbar row 5 */}
          <div className="flex h-[48px] shrink-0 pl-px">
            <Seg c="w-[540px]">
              <Grip c="w-[18px]" />
              <T c="w-[32px]"><Merge /></T>
              <T c="w-[12px]"><Caret /></T>
              <T c="w-[38px]"><Merge flip /></T>
              <T c="w-[6px]"><Caret /></T>
              <T c="w-[42px]"><DiaDots /></T>
              <T c="w-[10px]"><Sep /></T>
              <div className="w-[11px] shrink-0" />
              <span className="w-[64px] shrink-0 text-[16px] text-[#8a8a8a] -mt-[2px]">Search:</span>
              <Input c="w-[172px]" />
              <div className="w-[5px] shrink-0" />
              <DropBtn />
              <div className="w-[7px] shrink-0" />
              <T c="w-[50px]"><BinocOff /></T>
              <T c="w-[46px]"><Wrench2 /></T>
            </Seg>
            <Seg c="w-[189px] ml-[12px]">
              <Grip c="w-[20px]" />
              <T c="w-[28px]"><Zoomer f="#fff" sign="M6 10h8M10 6v8" /></T>
              <T c="w-[40px]"><Zoomer f="#fff" sign="M6 10h8" /></T>
              <T c="w-[24px]"><Zoomer f="#0c4a8c" /></T>
              <T c="w-[42px]"><Zoomer f="#fff" sign="M6 10h8M10 6v8" under /></T>
              <T c="w-[22px]"><ZoomDot /></T>
            </Seg>
            <Seg c="w-[290px] ml-[35px]">
              <Grip c="w-[18px]" />
              <T c="w-[36px]"><Sunken><Cur1 /></Sunken></T>
              <T c="w-[44px]"><Raised><Cur2 /></Raised></T>
              <T c="w-[36px]"><Raised><Cur3 /></Raised></T>
              <T c="w-[18px]"><Sep /></T>
              <T c="w-[32px]"><DotBlock /></T>
              <T c="w-[32px]"><Pulse y bar /></T>
              <T c="w-[36px]"><Pulse /></T>
              <T c="w-[30px]"><Pulse y /></T>
            </Seg>
          </div>

          {/* docked panels */}
          <div className="h-[534px] shrink-0 flex bg-[#c8c8c8]">
            {/* sim */}
            <div className="w-[231px] shrink-0 flex flex-col pt-[3px] pl-[1px] bg-[#f0f0f0] border-r-2 border-[#b0b0b0]">
              <PanelHead icon={<Cart s={26} />} title="sim - Default" grip="ml-[8px]" />
              <div className="h-[25px] shrink-0 flex border-b-2 border-[#808080] mr-[2px] ml-[1px]">
                <div className="w-[17px] border-r border-[#aaa] flex items-start justify-center pt-[7px]">
                  <div className="w-0 h-0 border-x-[5px] border-t-[9px] border-x-transparent border-t-[#777]" />
                </div>
                <span className="pl-[2px] text-[17px] text-[#222] pt-px">Instance</span>
                <div className="ml-auto w-[3px] border-l border-[#808080]" />
              </div>
              <div className="flex-1 min-h-0 bg-white flex flex-col pt-[5px] border-l border-[#808080] mr-[2px] ml-[1px]">
                <div className="h-[24px] bg-[#bccbda] flex items-center text-[15px] text-[#222] shrink-0">
                  <div className="ml-[6px] w-[13px] h-[13px] bg-[#f4f4f4] border border-[#bbb] flex items-center justify-center text-[13px] leading-none font-bold">+</div>
                  <div className="w-[6px] h-px bg-[#999]" />
                  <svg width="18" height="20" viewBox="0 0 18 20" className="shrink-0">
                    <path d="M0 20L18 0v20z" fill="#0a5a90" />
                    <path d="M3 5h11v11H3z" fill="#30b8ec" />
                  </svg>
                  <span className="ml-[15px]">MSDFF</span>
                </div>
                <div className="h-[25px] flex items-center text-[16px] text-[#222] shrink-0 pl-[27px]">
                  <svg width="24" height="24" viewBox="0 0 24 24" className="shrink-0">
                    <path d="M1 0v23h23" fill="none" stroke="#1830d8" strokeWidth="1.6" />
                    <path d="M5 7c4-7 8 6 14-3" fill="none" stroke="#e83030" strokeWidth="2.4" />
                    <path d="M14 3L7 12M6 4l10 8" stroke="#20a8e0" strokeWidth="2" />
                    <path d="M4 20c4-9 12-9 17 0" fill="none" stroke="#40b040" strokeWidth="2.4" />
                  </svg>
                  <span className="ml-[10px]">#vsim_capacity#</span>
                </div>
                <div className="flex-1" />
                <div className="h-[23px] shrink-0 bg-[#f0f0f0] pt-0">
                  <HScroll thumb="w-[42px]" />
                </div>
              </div>
              <div className="h-[5px] shrink-0 border-t-2 border-[#b0b0b0]" />
              <div className="flex h-[32px] shrink-0">
                <Tab icon={<LibIc />} label="Library" c="w-[115px]" />
                <Tab active icon={<Cart />} label="sim" c="w-[84px]" />
                <SBtn dir="l" dim c="w-[15px] h-[30px]" />
                <SBtn dir="r" c="w-[15px] h-[30px]" />
              </div>
            </div>

            <div className="w-[13px] shrink-0" />

            {/* objects */}
            <div className="w-[197px] shrink-0 flex flex-col pt-[3px] bg-[#f0f0f0] border-r-2 border-[#b0b0b0]">
              <PanelHead icon={<Shapes s={26} />} title="Objects" grip="ml-[12px]" />
              <div className="h-[25px] shrink-0 flex ml-[2px] mr-[2px] bg-white">
                <div className="w-[15px] bg-[#f0f0f0] border-r border-[#aaa] flex items-start justify-center pt-[7px]">
                  <div className="w-0 h-0 border-x-[5px] border-t-[9px] border-x-transparent border-t-[#777]" />
                </div>
                <span className="pl-[2px] text-[16px] text-[#222] pt-[2px]">Name</span>
              </div>
              <div className="flex-1 min-h-0 flex flex-col ml-[2px] mr-[2px] bg-[#50598a]">
                <div className="h-[6px] shrink-0" />
                {OBJECTS.map(([n, a]) => (
                  <div key={n} className="h-[25.5px] shrink-0 bg-[#bccbda] border-b-2 border-[#7d8bad] flex items-center pl-[27px] text-[16px] text-[#222]">
                    <Dia a={a} />
                    <span className="ml-[5px]">{n}</span>
                  </div>
                ))}
              </div>
              <div className="h-[30px] shrink-0 pt-[5px] pb-[1px] mx-[2px]">
                <HScroll thumb="w-[46px]" />
              </div>
            </div>

            <div className="w-[16px] shrink-0" />

            {/* wave */}
            <div className="flex-1 min-w-0 flex flex-col bg-[#f0f0f0] pt-[5px]">
              <div className="h-[28px] shrink-0 bg-[#a0bcd6] flex items-center pl-[3px]">
                <WaveIc />
                <span className="ml-[6px] text-[16px] text-[#222] whitespace-nowrap pt-px">Wave - Default</span>
                <div className="ml-[6px] flex-1 h-[11px] border-y border-[#10305c] relative">
                  <div className="h-[3px] mt-[3px] border-y border-[#10305c] bg-[#e4eef6]" />
                  <div className="absolute left-[611px] -top-[3px] w-[32px] h-[15px] bg-[#a0bcd6] flex items-center">
                    <Dots />
                  </div>
                </div>
                <div className="ml-[10px] flex items-center gap-[5px] pr-[3px]">
                  <PlusCtl />
                  <UndockCtl />
                </div>
              </div>

              <div className="h-[4px] shrink-0" />

              <div className="h-[456px] shrink-0 flex">
                {/* names */}
                <div className="w-[238px] ml-[2px] shrink-0 flex flex-col border-l border-[#808080]">
                  <div className="h-[27px] shrink-0 bg-[#808080] flex items-center pl-[11px]">
                    <Shapes />
                    <div className="ml-[4px]"><Caret /></div>
                  </div>
                  <div className="h-[4px] shrink-0 bg-[#f0f0f0]" />
                  <div className="h-[330px] shrink-0 overflow-hidden bg-white pl-[11px]">
                    <div className="h-[4px] bg-[#808080]" />
                    {OBJECTS.map(([n, a]) => (
                      <div key={n} className="h-[25.5px] border-b-2 border-[#a8a8a8] flex items-center pl-[28px] text-[15px] text-[#222]">
                        <Dia a={a} />
                        <span className="ml-[7px]">/MSDFF/{n}</span>
                      </div>
                    ))}
                  </div>
                  <div className="h-[4px] shrink-0 bg-[#e0e0e0]" />
                  <div className="h-[32px] shrink-0 bg-[#808080] flex items-center justify-end pr-[16px] pt-px text-[15px] text-[#e0e0e0]">
                    <div className="mr-auto ml-[11px] flex items-center gap-[1px]">
                      <svg width="16" height="16" viewBox="0 0 16 16"><path d="M2 13h12M5 11l3-8 3 8" fill="none" stroke="#5870a8" strokeWidth="2" /></svg>
                      <svg width="18" height="18" viewBox="0 0 18 18"><rect x="1" y="2" width="16" height="13" fill="#84a8d8" /><path d="M4 6h7M4 9h5" stroke="#fff" /></svg>
                      <svg width="16" height="16" viewBox="0 0 16 16"><circle cx="8" cy="8" r="7" fill="#68b868" /><path d="M8 5v6M5 8h6" stroke="#fff" strokeWidth="1.6" /></svg>
                    </div>
                    Now
                  </div>
                  <div className="h-[26px] shrink-0 bg-[#808080] flex items-center">
                    <div className="w-[70px] shrink-0 flex items-center justify-end gap-[2px] pr-[2px]">
                      <svg width="16" height="20" viewBox="0 0 16 20"><path d="M4 9V5a4 4 0 0 1 8 0" fill="none" stroke="#d8b050" strokeWidth="2" /><rect x="1" y="9" width="14" height="11" fill="#e8b840" /></svg>
                      <svg width="14" height="20" viewBox="0 0 14 20"><path d="M1 19L11 4" stroke="#a8c4ea" strokeWidth="3" /><path d="M9 1h4v4l-2 2-3-3z" fill="#a8c4ea" /></svg>
                      <svg width="15" height="15" viewBox="0 0 15 15"><circle cx="7.5" cy="7.5" r="7" fill="#e85050" /><path d="M4 7.5h7" stroke="#fff" strokeWidth="2" /></svg>
                    </div>
                    <div className="flex-1 h-full bg-white flex items-center justify-end pr-[16px] pt-px text-[15px] text-[#222]">Cursor 1</div>
                  </div>
                  <div className="h-[3px] shrink-0 bg-[#e0e0e0]" />
                  <div className="h-[30px] shrink-0 pl-[11px] pt-[3px] bg-[#f0f0f0] border-b-2 border-[#808080]">
                    <HScroll dim />
                  </div>
                </div>

                <div className="w-[4px] shrink-0 bg-[#dcdcdc]" />

                {/* values */}
                <div className="w-[149px] shrink-0 flex flex-col border-l border-[#a0a0a0]">
                  <div className="h-[27px] shrink-0 bg-[#808080] flex items-center justify-end pr-[7px] pt-[2px] text-[15px] text-[#d8d8d8]">Msgs</div>
                  <div className="h-[4px] shrink-0 bg-[#f0f0f0]" />
                  <div className="h-[330px] shrink-0 overflow-hidden bg-white">
                    <div className="h-[4px] bg-[#808080]" />
                    {VALUES.map((v, i) => (
                      <div key={i} className="h-[25.5px] border-b-2 border-[#a8a8a8] flex items-center pl-px text-[15px] text-[#222]">
                        {v}
                      </div>
                    ))}
                  </div>
                  <div className="h-[4px] shrink-0 bg-[#e0e0e0]" />
                  <div className="h-[32px] shrink-0 bg-[#808080] flex items-center justify-end pr-[14px] pt-px text-[15px] text-[#e0e0e0]">300 ps</div>
                  <div className="h-[26px] shrink-0 bg-white flex items-center justify-end pr-[14px] pt-px text-[15px] text-[#222]">240 ps</div>
                  <div className="h-[3px] shrink-0 bg-[#e0e0e0]" />
                  <div className="h-[30px] shrink-0 pt-[3px] bg-[#f0f0f0] border-b-2 border-[#808080]">
                    <HScroll dim />
                  </div>
                </div>

                <div className="w-[4px] shrink-0 bg-[#dcdcdc]" />

                {/* wave canvas */}
                <div className="w-[1029px] shrink-0 flex flex-col">
                  <div className="h-[27px] shrink-0 bg-black" />
                  <div className="h-[4px] shrink-0 bg-[#e8e8e8]" />
                  <Waves />
                  <div className="h-[2px] shrink-0 bg-[#e8e8e8]" />
                  <div className="h-[34px] shrink-0 bg-black">
                    <TimeRuler />
                  </div>
                  <div className="h-[26px] shrink-0 bg-black border-t border-[#606060]" />
                  <div className="h-[3px] shrink-0 bg-[#e8e8e8]" />
                  <div className="h-[30px] shrink-0 flex pl-[2px] pr-[5px] pt-[4px] pb-[2px] bg-[#f0f0f0]">
                    <SBtn dir="l" c="w-[20px]" />
                    <div className="w-[33px] bg-[#c0c0c0] shrink-0" />
                    <div className="w-[720px] shrink-0 border-r-2 border-b-2 border-[#9c9c9c] border-l border-l-white bg-[#f0f0f0]" />
                    <div className="flex-1 bg-[#c0c0c0] pl-[4px]">
                      <div className="w-px h-full bg-[#e0c860]" />
                    </div>
                    <SBtn dir="r" c="w-[21px]" />
                  </div>
                </div>

                <div className="flex-1 bg-[#d8d8d8] border-l border-[#808080]" />
              </div>

              <div className="h-[7px] shrink-0" />
              <div className="h-[33px] shrink-0 flex">
                <Tab icon={<svg width="18" height="24" viewBox="0 0 18 24" className="shrink-0"><path d="M1 1h11l5 5v17H1z" fill="#fff" stroke="#999" /></svg>} label="test.v" c="w-[109px] -ml-[7px]" />
                <Tab active icon={<WaveIc />} label="Wave" c="w-[108px] border-r-2 border-l-2 rounded-br-[4px]" />
                <div className="flex-1 border-t-2 border-[#333] h-[2px]" />
              </div>
              <div className="h-px shrink-0" />
            </div>
          </div>

          <div className="h-[10px] shrink-0 bg-[#c8c8c8]" />

          {/* transcript */}
          <div className="flex-1 min-h-0 flex flex-col bg-[#f0f0f0]">
            <div className="h-[28px] shrink-0 flex items-center pl-[7px] pt-[6px]">
              <svg width="20" height="22" viewBox="0 0 20 24" className="shrink-0">
                <path d="M1 23V9a9 9 0 0 1 18 0v14h-5V10a4 4 0 0 0-8 0v13z" fill="#9a9a9a" stroke="#666" />
              </svg>
              <span className="ml-[5px] text-[16px] text-[#222]">Transcript</span>
              <div className="ml-[9px] flex-1 h-[11px] border-y border-[#909090] relative">
                <div className="h-[3px] mt-[3px] border-y border-[#909090]" />
                <div className="absolute left-[856px] -top-[3px] w-[32px] h-[15px] bg-[#f0f0f0] flex items-center">
                  <Dots />
                </div>
              </div>
              <div className="ml-[8px] flex items-center gap-[5px] pr-[3px]">
                <PlusCtl />
                <UndockCtl />
              </div>
            </div>
            <div className="h-[117px] shrink-0 ml-[6px] bg-white border-t-2 border-l-2 border-[#333] pl-[3px] pt-[6px] text-[17px] leading-[22px] text-[#222]">
              <div className={clsx(MONO, "whitespace-pre tracking-[0.25px]")}>force -freeze sim:/MSDFF/Y2 1 0, 0 {"{200 ps}"} -r 400</div>
              <div className={clsx(MONO, "whitespace-pre")}>
                <span className={clsx(SANS, "text-[16px] text-[#14148c]")}>VSIM 24&gt;</span> run
              </div>
              <div className="h-[22px]" />
              <div className="text-[16px] text-[#14148c]">VSIM 25&gt;</div>
            </div>
            <div className="flex-1 flex pt-[7px] gap-[4px]">
              <div className="w-[297px] ml-[3px] h-[2px] bg-[#b8b8b8]" />
              <div className="flex-1 h-[2px] bg-[#b8b8b8]" />
            </div>
          </div>
        </div>
      </div>

      {/* taskbar */}
      <div className="h-[46px] shrink-0 bg-[#24405a] flex items-center text-white relative">
        <svg width="26" height="24" viewBox="0 0 26 24" className="ml-[14px] shrink-0">
          <path d="M0 3.5l11-1.5v9.5H0zM12.5 1.8L26 0v11.5H12.5zM0 12.8h11v9.7L0 21zM12.5 12.8H26V24l-13.5-1.8z" fill="#fff" />
        </svg>
        <div className="ml-[29px] w-[22px] h-[22px] rounded-full border-[3px] border-white shrink-0" />
        <svg width="26" height="24" viewBox="0 0 26 24" className="ml-[31px] shrink-0">
          <path d="M3 1h15M3 23h15M3 6h15v12H3zM23 6v2M23 11v2M23 16v2" fill="none" stroke="#fff" strokeWidth="1.4" />
        </svg>
        <div className="ml-[25px] w-[43px] h-full flex items-center justify-center border-b-[3px] border-[#76b9ed] shrink-0">
          <svg width="26" height="26" viewBox="0 0 26 26">
            <circle cx="13" cy="13" r="12" fill="#1a9ad8" />
            <path d="M1 16C2 8 12 6 20 11c3 2 5 6 5 6-2 6-8 8-12 8C7 25 5 20 8 17c4-3 9 0 10 3-5-8-14-8-17-4z" fill="#40d890" />
            <path d="M10 18c2-2 7-2 8 1-1 2-4 3-6 2z" fill="#0a5aa8" />
          </svg>
        </div>
        <div className="ml-[14px] w-[43px] h-full flex items-center justify-center border-b-[3px] border-[#76b9ed] shrink-0">
          <svg width="26" height="26" viewBox="0 0 26 26">
            <circle cx="12" cy="11" r="8.5" fill="none" stroke="#30a8f0" strokeWidth="5" />
            <circle cx="18" cy="21" r="4" fill="#e8f4ff" />
            <circle cx="13" cy="22" r="3" fill="#e8f4ff" />
          </svg>
        </div>
        <div className="ml-[8px] w-[55px] h-full bg-[#125c96] flex items-center justify-center border-b-[3px] border-[#76b9ed] shrink-0">
          <div className="bg-[#f0f0f0] flex">
            <MLogo />
          </div>
        </div>
        <div className="ml-[8px] w-[43px] h-full flex items-center justify-center border-b-[3px] border-[#76b9ed] shrink-0">
          <svg width="26" height="26" viewBox="0 0 26 26">
            <circle cx="13" cy="13" r="12" fill="#c8b898" />
            <path d="M9 4h8v8l2 10H7l2-10z" fill="#3a3020" />
            <circle cx="13" cy="8" r="3.5" fill="#d8b090" />
            <path d="M10 14h6l1 5h-8z" fill="#c89820" />
          </svg>
        </div>

        <svg width="20" height="14" viewBox="0 0 20 14" className="ml-auto shrink-0 mr-[12px]">
          <path d="M1 13L10 2l9 11" fill="none" stroke="#fff" strokeWidth="1.4" />
        </svg>
        <svg width="24" height="30" viewBox="0 0 24 30" className="shrink-0 mr-[12px]">
          <ellipse cx="10" cy="10" rx="7" ry="9" fill="#111" />
          <ellipse cx="10" cy="19" rx="7" ry="9" fill="#fff" stroke="#111" />
          <path d="M12 1l6 4-6 2z" fill="#e81888" />
          <path d="M2 14l8 4-7 8z" fill="#e81888" />
          <rect x="13" y="14" width="10" height="12" rx="2" fill="#f0b840" />
          <path d="M4 29h6M12 29h6" stroke="#f09020" strokeWidth="2.5" />
        </svg>
        <svg width="24" height="24" viewBox="0 0 24 24" className="shrink-0 mr-[12px]">
          <path d="M2 9h4l6-6v18l-6-6H2z" fill="none" stroke="#fff" strokeWidth="1.2" />
          <path d="M15 8c2 2 2 6 0 8M18 5c4 4 4 10 0 14" fill="none" stroke="#fff" strokeWidth="1.2" />
        </svg>
        <div className="w-[22px] h-[20px] border-2 border-white shrink-0 mr-[19px] flex">
          <div className="w-1/2 bg-white" />
          <div className="w-1/2 bg-transparent" />
        </div>
        <svg width="24" height="26" viewBox="0 0 24 26" className="shrink-0 mr-[9px]">
          <path d="M1 24C4 12 10 6 20 3M6 25c2-7 6-12 14-15" fill="none" stroke="#fff" strokeWidth="1.2" />
        </svg>
        <span className="w-[43px] shrink-0 text-[21px] font-['Noto_Sans_CJK_SC',sans-serif]">中</span>
        <span className="w-[23px] h-[27px] shrink-0 bg-white text-black text-[21px] leading-[27px] text-center font-['Noto_Sans_CJK_SC',sans-serif]">拼</span>
        <span className="ml-[25px] w-[79px] shrink-0 text-[19px] text-white">15:18</span>
        <div className="w-[23px] h-[26px] shrink-0 bg-white mr-[37px] flex flex-col justify-center gap-[3px] px-[3px]">
          <div className="h-px bg-[#444]" />
          <div className="h-px bg-[#444]" />
          <div className="h-px w-2/3 bg-[#444]" />
        </div>
        {/* csdn watermark burnt over the tray */}
        <span className="absolute left-[1664px] top-[15px] text-[15.5px] scale-y-[1.15] text-[#c8c8c8]/80 whitespace-nowrap">https://blog.csdn.net/qq_54000303</span>
      </div>
    </div>
  );
}
